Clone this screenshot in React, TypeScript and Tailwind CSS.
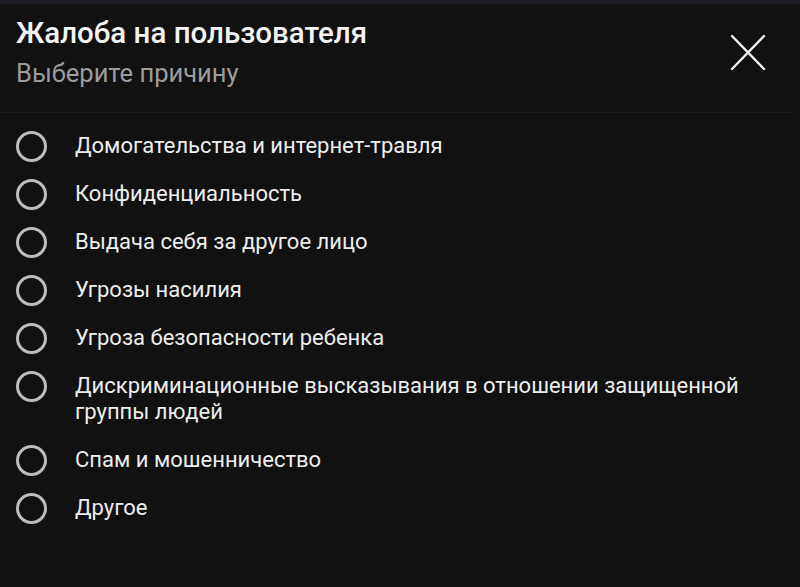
const REASONS = [
  "Домогательства и интернет-травля",
  "Конфиденциальность",
  "Выдача себя за другое лицо",
  "Угрозы насилия",
  "Угроза безопасности ребенка",
  "Дискриминационные высказывания в отношении защищенной группы людей",
  "Спам и мошенничество",
  "Другое",
];

function CloseIcon() {
  return (
    <svg width="36" height="37" viewBox="0 0 36 37" fill="none">
      <path d="M2 2 L34 35 M34 2 L2 35" stroke="#f2f2f2" strokeWidth="2.4" strokeLinecap="round" />
    </svg>
  );
}

export default function App() {
  return (
    <div
      className="h-[587px] w-[800px] overflow-hidden bg-[#111112] text-[#ececec]"
      style={{ fontFamily: "Roboto, 'Noto Sans', sans-serif" }}
    >
      <div className="h-[4px] bg-[#1e1b22]" />
      <div className="flex items-start justify-between pl-4 pr-[34px] pt-[11px]">
        <div>
          <h1 className="text-[29.5px] font-medium leading-[36px] text-[#f4f4f4]">
            Жалоба на пользователя
          </h1>
          <p className="mt-[6px] text-[25.5px] leading-[32px] text-[#9c9c9c]">Выберите причину</p>
        </div>
        <button className="mt-[19px]">
          <CloseIcon />
        </button>
      </div>
      <div className="mt-[23px] mr-[7px] h-px bg-[#1d1d1e]" />
      <ul className="pt-[20px]">
        {REASONS.map((r) => (
          <li key={r} className="flex items-start pb-[22px] pl-4 pr-[40px]">
            <div className="flex h-[26px] w-[31px] shrink-0 items-center">
              <span className="h-[31px] w-[31px] shrink-0 rounded-full border-[3px] border-[#bdbdbd]" />
            </div>
            <span className="ml-[28px] text-[22px] leading-[26px] text-[#ededed]">{r}</span>
          </li>
        ))}
      </ul>
    </div>
  );
}
